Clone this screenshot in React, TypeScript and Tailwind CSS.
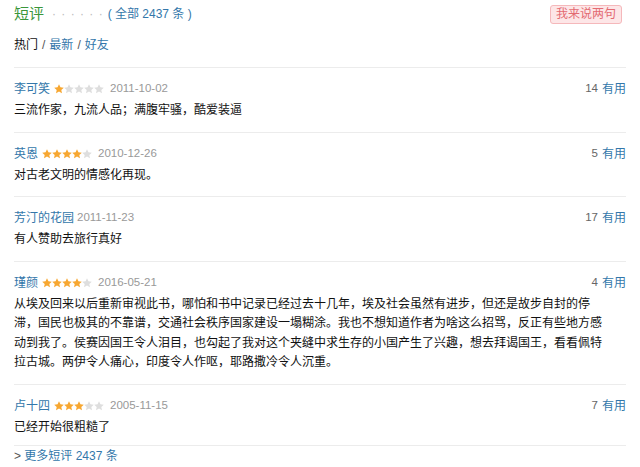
import React from 'react';

type Comment = {
  id: number;
  name: string;
  stars: number;
  date: string;
  votes: number;
  text: string;
};

const comments: Comment[] = [
  { id: 1, name: '李可笑', stars: 1, date: '2011-10-02', votes: 14, text: '三流作家，九流人品；满腹牢骚，酷爱装逼' },
  { id: 2, name: '英恩', stars: 4, date: '2010-12-26', votes: 5, text: '对古老文明的情感化再现。' },
  { id: 3, name: '芳汀的花园', stars: 0, date: '2011-11-23', votes: 17, text: '有人赞助去旅行真好' },
  {
    id: 4,
    name: '瑾颜',
    stars: 4,
    date: '2016-05-21',
    votes: 4,
    text: '从埃及回来以后重新审视此书，哪怕和书中记录已经过去十几年，埃及社会虽然有进步，但还是故步自封的停滞，国民也极其的不靠谱，交通社会秩序国家建设一塌糊涂。我也不想知道作者为啥这么招骂，反正有些地方感动到我了。侯赛因国王令人泪目，也勾起了我对这个夹缝中求生存的小国产生了兴趣，想去拜谒国王，看看佩特拉古城。两伊令人痛心，印度令人作呕，耶路撒冷令人沉重。',
  },
  { id: 5, name: '卢十四', stars: 3, date: '2005-11-15', votes: 7, text: '已经开始很粗糙了' },
];

const Star = ({ on }: { on: boolean }) => (
  <svg width="10" height="10" viewBox="0 0 20 20" className="block">
    <polygon
      points="10,0.5 12.9,6.6 19.6,7.3 14.6,11.9 16,18.6 10,15.2 4,18.6 5.4,11.9 0.4,7.3 7.1,6.6"
      fill={on ? '#f7a731' : '#dedede'}
    />
  </svg>
);

const Stars = ({ count }: { count: number }) => (
  <span className="ml-[4px] flex items-center">
    {[0, 1, 2, 3, 4].map((i) => (
      <Star key={i} on={i < count} />
    ))}
  </span>
);

const App: React.FC = () => {
  return (
    <div className="h-[467px] w-[640px] overflow-hidden bg-white px-[14px] font-['Liberation_Sans','Noto_Sans_CJK_SC',sans-serif] text-[12px] text-[#222]">
      <div className="flex h-[28px] items-center justify-between">
        <div className="flex items-center">
          <h2 className="text-[15px] leading-[18px] text-[#3a963a]">短评</h2>
          <span className="ml-[8px] text-[12px] tracking-[1px] text-[#bbb]">· · · · · ·</span>
          <span className="ml-[4px] text-[12px] text-[#37a]">( 全部 2437 条 )</span>
        </div>
        <button className="mr-[4px] h-[19px] rounded-[3px] border border-[#f5b8bb] bg-[#fde6e7] px-[5px] text-[12px] leading-[17px] text-[#e36a72]">
          我来说两句
        </button>
      </div>

      <div className="mt-[9px] mb-[14px] flex items-center leading-[16px]">
        <span className="text-[#111]">热门</span>
        <span className="mx-[4px] text-[#555]">/</span>
        <span className="text-[#37a]">最新</span>
        <span className="mx-[4px] text-[#555]">/</span>
        <span className="text-[#37a]">好友</span>
      </div>

      <div>
        {comments.map((c) => (
          <div key={c.id} className="border-t border-[#ececec] pt-[13px] pb-[13px] last:pb-[10px]">
            <div className="flex h-[16px] items-center justify-between">
              <div className="flex items-center">
                <span className="text-[#37a]">{c.name}</span>
                {c.stars > 0 && <Stars count={c.stars} />}
                <span className={`${c.stars > 0 ? 'ml-[6px]' : 'ml-[3px]'} text-[11.5px] text-[#999]`}>{c.date}</span>
              </div>
              <div className="flex items-center">
                <span className="text-[11.5px] text-[#666]">{c.votes}</span>
                <span className="ml-[4px] text-[#37a]">有用</span>
              </div>
            </div>
            <p className="mt-[2px] w-[588px] font-['Noto_Sans_CJK_SC',sans-serif] text-[12px] leading-[19.5px] text-[#111]">
              {c.text}
            </p>
          </div>
        ))}
      </div>

      <div className="border-t border-[#ececec] pt-[2px] leading-[16px]">
        <span className="text-[#555]">&gt; </span>
        <span className="text-[#37a]">更多短评 2437 条</span>
      </div>
    </div>
  );
};

export default App;
